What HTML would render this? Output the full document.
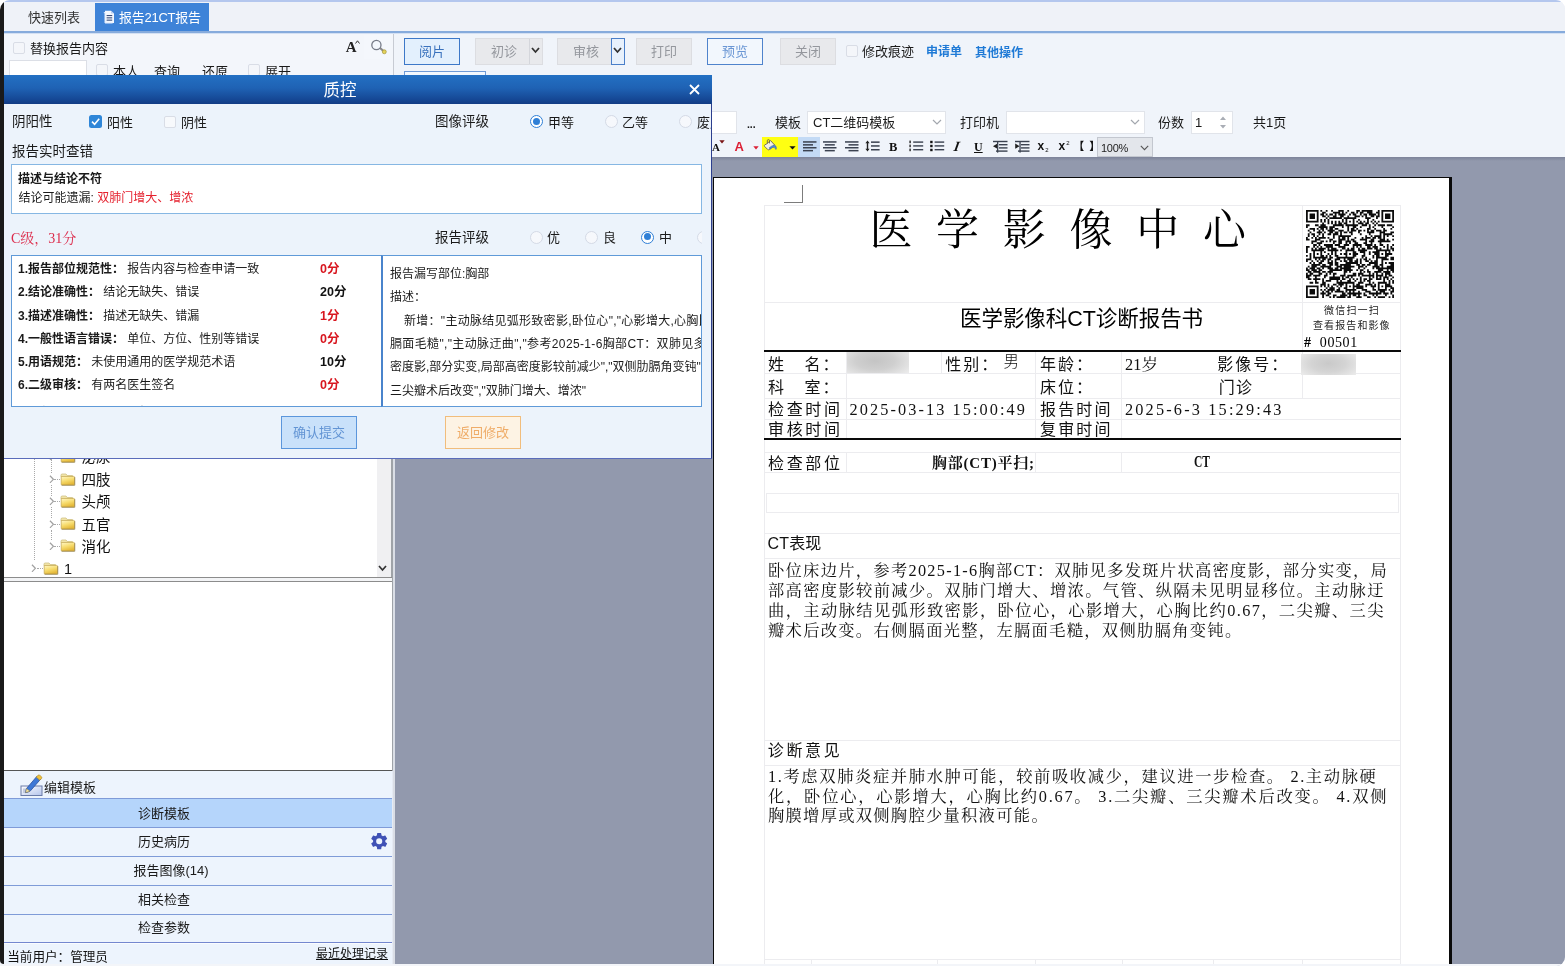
<!DOCTYPE html>
<html lang="zh-CN">
<head>
<meta charset="utf-8">
<title>报告21CT报告</title>
<style>
*{box-sizing:border-box;margin:0;padding:0}
html,body{width:1565px;height:966px;overflow:hidden;background:#fff}
body{font-family:"Liberation Sans","Noto Sans CJK SC",sans-serif;font-size:13px;color:#1a1a1a;position:relative}
#app{position:absolute;left:0;top:0;width:1565px;height:966px;overflow:hidden;background:#f0f4fa;border-radius:10px 9px 9px 0;will-change:transform}
.a{position:absolute;white-space:nowrap}
.t{position:absolute;white-space:nowrap;line-height:16px;height:16px}
.cb{position:absolute;width:12px;height:12px;background:#f4f6fa;border:1px solid #d9dde6;border-radius:2px}
.rd{position:absolute;width:13px;height:13px;background:#f6f8fc;border:1px solid #d4dae6;border-radius:50%}
.rd.on{border:1.5px solid #2f7fd6;background:#fff}
.rd.on:after{content:"";position:absolute;left:1.5px;top:1.5px;width:7px;height:7px;border-radius:50%;background:#2f7fd6}
.btn{position:absolute;height:27px;line-height:25px;text-align:center;font-size:13px;border:1px solid #dcdde1;background:#e8e9ec;color:#94979d}
.btn.bl{border-color:#3d78c8;background:#e3f0fd;color:#3a72bd}
.srf{font-family:"Liberation Serif","Noto Serif CJK SC",serif}
</style>
</head>
<body>
<div id="app">

<!-- ===== top tab bar ===== -->
<div class="a" style="left:0;top:0;width:1565px;height:1.5px;background:#b4c7ee"></div>
<div class="a" style="left:0;top:2px;width:1565px;height:29px;background:#eff2f8"></div>
<div class="t" style="left:28px;top:9.6px;font-size:13px;color:#333">快速列表</div>
<div class="a" style="left:95px;top:3px;width:114px;height:28px;background:#3e83d8"></div>
<svg class="a" style="left:103px;top:9.5px" width="12" height="14" viewBox="0 0 12 14"><path d="M2 .8 H8 L11 3.6 V13 H2 Z" fill="#f4f8ff"/><path d="M.8 2.6 H2 V13 H9.6" fill="none" stroke="#dfe9fb" stroke-width="1"/><rect x="3.6" y="5" width="5.6" height="1.1" fill="#3d4f7a"/><rect x="3.6" y="7.3" width="5.6" height="1.1" fill="#3d4f7a"/><rect x="3.6" y="9.6" width="5.6" height="1.1" fill="#3d4f7a"/><path d="M8 .8 V3.6 H11" fill="#b9cdf0"/></svg>
<div class="t" style="left:119px;top:9.5px;font-size:13px;letter-spacing:-.25px;color:#fff">报告21CT报告</div>
<div class="a" style="left:0;top:31px;width:1565px;height:1.5px;background:#86abdc"></div>
<div class="a" style="left:0;top:32.5px;width:1565px;height:1px;background:#d3e0f3"></div>

<!-- ===== left panel top rows ===== -->
<div class="a" style="left:4px;top:33.5px;width:389px;height:45px;background:#f3f6fb"></div>
<div class="cb" style="left:13px;top:42px"></div>
<div class="t" style="left:30px;top:40.6px">替换报告内容</div>
<div class="a" style="left:345.8px;top:38px;font:bold 15px/18px 'Liberation Serif',serif;color:#222">A</div>
<svg class="a" style="left:355px;top:40px" width="5" height="4" viewBox="0 0 5 4"><path d="M0.5 3.5 L2.5 .8 L4.5 3.5" fill="none" stroke="#333" stroke-width="1"/></svg>
<div class="a" style="left:364px;top:35px;width:26px;height:24px;background:#f4f7fc"></div>
<svg class="a" style="left:369px;top:38px" width="20" height="18" viewBox="0 0 20 18">
 <line x1="10.5" y1="9.5" x2="15" y2="13.5" stroke="#8a8a8a" stroke-width="2.2"/>
 <circle cx="7.4" cy="7" r="4.6" fill="#f3f7fd" stroke="#767b88" stroke-width="1.3"/>
 <circle cx="15.3" cy="13.8" r="2" fill="#e3d25a" stroke="#9a8c2e" stroke-width=".6"/>
</svg>
<div class="a" style="left:9px;top:60px;width:78px;height:22px;background:#fff;border:1px solid #dcdfe6"></div>
<div class="cb" style="left:96px;top:64px"></div>
<div class="t" style="left:113px;top:64px">本人</div>
<div class="t" style="left:154px;top:64px">查询</div>
<div class="t" style="left:202px;top:64px">还原</div>
<div class="cb" style="left:248px;top:64px"></div>
<div class="t" style="left:265px;top:64px">展开</div>
<div class="a" style="left:393px;top:34px;width:1px;height:44px;background:#c7cbd3"></div>

<!-- ===== main toolbar ===== -->
<div class="btn bl" style="left:404px;top:38px;width:56px">阅片</div>
<div class="btn" style="left:475px;top:38px;width:68px;text-align:left;padding-left:15px">初诊</div>
<div class="a" style="left:529px;top:39px;width:1px;height:25px;background:#d4d6db"></div>
<svg class="a" style="left:530px;top:46px" width="11" height="9" viewBox="0 0 11 9"><path d="M2 2 L5.5 6 L9 2" fill="none" stroke="#333" stroke-width="1.8"/></svg>
<div class="btn" style="left:557px;top:38px;width:55px;text-align:left;padding-left:15px;border-right:none">审核</div>
<div class="a" style="left:611px;top:38px;width:14px;height:27px;background:#e8f1fc;border:1px solid #4a7fc9"></div>
<svg class="a" style="left:612px;top:46px" width="11" height="9" viewBox="0 0 11 9"><path d="M2 2 L5.5 6 L9 2" fill="none" stroke="#333" stroke-width="1.8"/></svg>
<div class="btn" style="left:636px;top:38px;width:56px">打印</div>
<div class="btn bl" style="left:707px;top:38px;width:56px;background:#f2f7fd;color:#6b97d4;border-color:#4f83cc">预览</div>
<div class="btn" style="left:780px;top:38px;width:56px">关闭</div>
<div class="cb" style="left:846px;top:45px"></div>
<div class="t" style="left:862px;top:44px">修改痕迹</div>
<div class="t" style="left:926px;top:44px;font-size:12px;font-weight:bold;color:#1f7ad6">申请单</div>
<div class="t" style="left:975px;top:45px;font-size:12px;font-weight:bold;color:#1f7ad6">其他操作</div>
<div class="a" style="left:404px;top:71px;width:82px;height:20px;background:#f3f8fe;border:1px solid #6f9ad6"></div>

<!-- ===== template / printer row ===== -->
<div class="a" style="left:712px;top:111px;width:25px;height:23px;background:#fff;border:1px solid #e1e4ea;border-left:none"></div>
<div class="t" style="left:747px;top:116px;font-size:10.5px;font-weight:bold;letter-spacing:-.1px">...</div>
<div class="t" style="left:775px;top:115px">模板</div>
<div class="a" style="left:807px;top:111px;width:139px;height:23px;background:#fff;border:1px solid #e1e4ea"></div>
<div class="t" style="left:813px;top:115px">CT二维码模板</div>
<svg class="a" style="left:932px;top:119px" width="10" height="7" viewBox="0 0 10 7"><path d="M1 1 L5 5 L9 1" fill="none" stroke="#a3a7ae" stroke-width="1.2"/></svg>
<div class="t" style="left:960px;top:115px">打印机</div>
<div class="a" style="left:1006px;top:111px;width:139px;height:23px;background:#fff;border:1px solid #e1e4ea"></div>
<svg class="a" style="left:1130px;top:119px" width="10" height="7" viewBox="0 0 10 7"><path d="M1 1 L5 5 L9 1" fill="none" stroke="#a3a7ae" stroke-width="1.2"/></svg>
<div class="t" style="left:1158px;top:115px">份数</div>
<div class="a" style="left:1191px;top:111px;width:42px;height:23px;background:#fff;border:1px solid #e1e4ea"></div>
<div class="t" style="left:1195px;top:115px">1</div>
<svg class="a" style="left:1219px;top:115px" width="8" height="15" viewBox="0 0 8 15"><path d="M1 5 L4 1.5 L7 5 Z M1 10 L4 13.5 L7 10 Z" fill="#a9adb5"/></svg>
<div class="t" style="left:1253px;top:115px">共1页</div>
<!-- ===== format toolbar ===== -->
<div class="a" style="left:712px;top:141px;font:bold 11px/12px 'Liberation Serif',serif;color:#111">A</div>
<svg class="a" style="left:719px;top:139.5px" width="6" height="4" viewBox="0 0 6 4"><path d="M.3 .3 H5.7 L3 3.6 Z" fill="#7a1414"/></svg>
<div class="a" style="left:734.5px;top:140px;font:bold 13px/14px 'Liberation Sans',sans-serif;color:#dc2035">A</div>
<svg class="a" style="left:752.5px;top:145.5px" width="6" height="4" viewBox="0 0 6 4"><path d="M.3 .3 H5.7 L3 3.4 Z" fill="#dc2035"/></svg>
<div class="a" style="left:762px;top:137px;width:36px;height:20px;background:#ffff12"></div>
<svg class="a" style="left:763px;top:139px" width="15" height="13" viewBox="0 0 15 13">
 <path d="M3.2 5.2 L7.6 1.6 L11.6 6 L6.4 10.6 Q5.4 11.2 4.6 10.4 L1.6 7.4 Q1 6.4 1.8 5.8 Z" fill="#f4f1e4" stroke="#6b6450" stroke-width=".9"/>
 <path d="M4.3 4.6 V1.8 Q4.3 .6 5.4 .6 Q6.5 .6 6.5 1.8 V4.4" fill="none" stroke="#6b6450" stroke-width=".9"/>
 <path d="M6.2 8.8 Q9 6.2 11.4 6.2 Q13.6 6.6 13.4 9.6 Q13 11.4 12.2 9.6 Q11.6 7.8 9.4 8.6 L7 10.2 Z" fill="#4f86d9" stroke="#3561a8" stroke-width=".5"/>
</svg>
<svg class="a" style="left:788.5px;top:145.5px" width="7" height="4" viewBox="0 0 7 4"><path d="M.4 .3 H6.6 L3.5 3.6 Z" fill="#111"/></svg>
<div class="a" style="left:798px;top:137px;width:22px;height:20px;background:#c3daf5"></div>
<svg class="a" style="left:802.5px;top:140px" width="14" height="12" viewBox="0 0 14 12"><rect x="0.0" y="1.2" width="13.5" height="1.5" fill="#3b4250"/><rect x="0.0" y="4.1" width="10" height="1.5" fill="#3b4250"/><rect x="0.0" y="7.0" width="13.5" height="1.5" fill="#3b4250"/><rect x="0.0" y="9.9" width="10" height="1.5" fill="#3b4250"/></svg>
<svg class="a" style="left:823.2px;top:140px" width="14" height="12" viewBox="0 0 14 12"><rect x="0.0" y="1.2" width="13.5" height="1.5" fill="#3b4250"/><rect x="1.8" y="4.1" width="10" height="1.5" fill="#3b4250"/><rect x="0.0" y="7.0" width="13.5" height="1.5" fill="#3b4250"/><rect x="1.8" y="9.9" width="10" height="1.5" fill="#3b4250"/></svg>
<svg class="a" style="left:844.5px;top:140px" width="14" height="12" viewBox="0 0 14 12"><rect x="0.0" y="1.2" width="13.5" height="1.5" fill="#3b4250"/><rect x="3.5" y="4.1" width="10" height="1.5" fill="#3b4250"/><rect x="0.0" y="7.0" width="13.5" height="1.5" fill="#3b4250"/><rect x="3.5" y="9.9" width="10" height="1.5" fill="#3b4250"/></svg>
<svg class="a" style="left:865px;top:140px" width="15" height="12" viewBox="0 0 15 12">
 <path d="M2.5 .6 L.4 3.2 H1.8 V8.8 H.4 L2.5 11.4 L4.6 8.8 H3.2 V3.2 H4.6 Z" fill="#222"/>
 <rect x="6" y="1.4" width="8.6" height="1.5" fill="#3b4250"/><rect x="6" y="5.2" width="8.6" height="1.5" fill="#3b4250"/><rect x="6" y="9" width="8.6" height="1.5" fill="#3b4250"/>
</svg>
<div class="a" style="left:889px;top:139.5px;font:bold 12.5px/14px 'Liberation Serif',serif;color:#111">B</div>
<svg class="a" style="left:908.5px;top:140px" width="15" height="12" viewBox="0 0 15 12">
 <rect x=".4" y=".6" width="1.4" height="2.6" fill="#222"/><rect x=".4" y="4.6" width="1.4" height="2.6" fill="#222"/><rect x=".4" y="8.6" width="1.4" height="2.6" fill="#222"/>
 <rect x="4.2" y="1.4" width="10" height="1.4" fill="#3b4250"/><rect x="4.2" y="5.2" width="10" height="1.4" fill="#3b4250"/><rect x="4.2" y="9" width="10" height="1.4" fill="#3b4250"/>
</svg>
<svg class="a" style="left:930px;top:140px" width="15" height="12" viewBox="0 0 15 12">
 <rect x=".2" y=".8" width="2.4" height="2.4" fill="#111"/><rect x=".2" y="4.8" width="2.4" height="2.4" fill="#111"/><rect x=".2" y="8.8" width="2.4" height="2.4" fill="#111"/>
 <rect x="4.6" y="1.4" width="9.6" height="1.4" fill="#3b4250"/><rect x="4.6" y="5.2" width="9.6" height="1.4" fill="#3b4250"/><rect x="4.6" y="9" width="9.6" height="1.4" fill="#3b4250"/>
</svg>
<div class="a" style="left:953.5px;top:139px;font:italic bold 14px/15px 'Liberation Serif',serif;color:#111;transform:skewX(-10deg)">I</div>
<div class="a" style="left:974px;top:139.5px;font:bold 12px/14px 'Liberation Serif',serif;color:#111;text-decoration:underline">U</div>
<svg class="a" style="left:993px;top:140px" width="15" height="13" viewBox="0 0 15 13">
 <rect x="0" y=".8" width="14.5" height="1.4" fill="#3b4250"/><rect x="6" y="4" width="8.5" height="1.4" fill="#3b4250"/><rect x="6" y="7.2" width="8.5" height="1.4" fill="#3b4250"/><rect x="3" y="10.4" width="11.5" height="1.4" fill="#3b4250"/>
 <path d="M0 6.2 L4.4 3.6 V8.8 Z" fill="#222"/><rect x="4" y="2" width="1.3" height="10.6" fill="#3b4250"/>
</svg>
<svg class="a" style="left:1015px;top:140px" width="15" height="13" viewBox="0 0 15 13">
 <rect x="0" y=".8" width="14.5" height="1.4" fill="#3b4250"/><rect x="6" y="4" width="8.5" height="1.4" fill="#3b4250"/><rect x="6" y="7.2" width="8.5" height="1.4" fill="#3b4250"/><rect x="3" y="10.4" width="11.5" height="1.4" fill="#3b4250"/>
 <path d="M4.6 6.2 L.2 3.6 V8.8 Z" fill="#222"/><rect x="4.4" y="2" width="1.3" height="10.6" fill="#3b4250"/>
</svg>
<div class="a" style="left:1037.5px;top:139px;font:bold 12px/14px 'Liberation Sans',sans-serif;color:#111">x<span style="font-size:6px;font-weight:normal;position:relative;top:2px;left:1px">2</span></div>
<div class="a" style="left:1058.5px;top:139px;font:bold 12px/14px 'Liberation Sans',sans-serif;color:#111">x<span style="font-size:6px;font-weight:normal;position:relative;top:-5px;left:1px">2</span></div>
<div class="a" style="left:1073.2px;top:138px;font:bold 11px/16px 'Liberation Sans','Noto Sans CJK SC',sans-serif;color:#111;letter-spacing:5px">【】</div>
<div class="a" style="left:1097px;top:137px;width:56px;height:20px;background:#e3e6eb;border:1px solid #c3c7cf"></div>
<div class="t" style="left:1101px;top:139.5px;font-size:11px;letter-spacing:-.3px;color:#222">100%</div>
<svg class="a" style="left:1140px;top:144.5px" width="9" height="6" viewBox="0 0 9 6"><path d="M.8 .8 L4.5 4.6 L8.2 .8" fill="none" stroke="#555" stroke-width="1.1"/></svg>


<!-- ===== gray workspace ===== -->
<div class="a" style="left:395.2px;top:157px;width:1170px;height:809px;background:#9299ad"></div>
<div class="a" style="left:395px;top:157px;width:1170px;height:4px;background:linear-gradient(#7d8399,#9299ad)"></div>
<div class="a" style="left:395px;top:964px;width:1170px;height:2px;background:#e9edf5"></div>

<!-- ===== report page ===== -->
<div class="a" style="left:712.8px;top:177px;height:800px;background:#fff;border-left:1.6px solid #0a0a0a;border-top:1.3px solid #0a0a0a;width:739px"></div>
<div class="a" style="left:1449px;top:177px;width:3px;height:789px;background:#0a0a0a"></div>
<div class="a" style="left:784px;top:184.5px;width:18.5px;height:18.5px;border-right:1px solid #7c7c7c;border-bottom:1px solid #7c7c7c"></div>
<div class="a" style="left:764px;top:205px;width:1px;height:761px;background:#ececef"></div>
<div class="a" style="left:1400px;top:205px;width:1px;height:761px;background:#ececef"></div>
<div class="a" style="left:764px;top:205px;width:637px;height:1px;background:#ececef"></div>
<div class="a" style="left:764px;top:302px;width:637px;height:1px;background:#ececef"></div>
<div class="a" style="left:1302px;top:205px;width:1px;height:146px;background:#ececef"></div>
<div class="a" style="left:764px;top:373px;width:637px;height:1px;background:#ececef"></div>
<div class="a" style="left:764px;top:398px;width:637px;height:1px;background:#ececef"></div>
<div class="a" style="left:764px;top:419px;width:637px;height:1px;background:#ececef"></div>
<div class="a" style="left:764px;top:452px;width:637px;height:1px;background:#ececef"></div>
<div class="a" style="left:764px;top:472px;width:637px;height:1px;background:#ececef"></div>
<div class="a" style="left:846px;top:452px;width:1px;height:20px;background:#ececef"></div>
<div class="a" style="left:1035px;top:452px;width:1px;height:20px;background:#ececef"></div>
<div class="a" style="left:1121px;top:452px;width:1px;height:20px;background:#ececef"></div>
<div class="a" style="left:766px;top:493px;width:633px;height:1px;background:#ececef"></div>
<div class="a" style="left:766px;top:512px;width:633px;height:1px;background:#ececef"></div>
<div class="a" style="left:766px;top:493px;width:1px;height:20px;background:#ececef"></div>
<div class="a" style="left:1398px;top:493px;width:1px;height:20px;background:#ececef"></div>
<div class="a" style="left:764px;top:533px;width:637px;height:1px;background:#ececef"></div>
<div class="a" style="left:764px;top:558px;width:637px;height:1px;background:#ececef"></div>
<div class="a" style="left:764px;top:740px;width:637px;height:1px;background:#ececef"></div>
<div class="a" style="left:764px;top:765px;width:637px;height:1px;background:#ececef"></div>
<div class="a" style="left:764px;top:959px;width:637px;height:1px;background:#ececef"></div>
<div class="a" style="left:811px;top:959px;width:1px;height:7px;background:#ececef"></div>
<div class="a" style="left:937px;top:959px;width:1px;height:7px;background:#ececef"></div>
<div class="a" style="left:1035px;top:959px;width:1px;height:7px;background:#ececef"></div>
<div class="a" style="left:1122px;top:959px;width:1px;height:7px;background:#ececef"></div>
<div class="a" style="left:1213px;top:959px;width:1px;height:7px;background:#ececef"></div>
<div class="a" style="left:1302px;top:959px;width:1px;height:7px;background:#ececef"></div>
<div class="t" style="left:820px;top:964.5px;font-size:16px;letter-spacing:2px;line-height:20px;height:20px;color:#111">报告医师</div>
<div class="t" style="left:1128px;top:964.5px;font-size:16px;letter-spacing:2px;line-height:20px;height:20px;color:#111">审核医师</div>

<div class="a" style="left:846px;top:352px;width:1px;height:46px;background:#ececef"></div>
<div class="a" style="left:1035px;top:352px;width:1px;height:46px;background:#ececef"></div>
<div class="a" style="left:1121px;top:352px;width:1px;height:46px;background:#ececef"></div>
<div class="a" style="left:1302px;top:352px;width:1px;height:46px;background:#ececef"></div>
<div class="a" style="left:941px;top:352px;width:1px;height:21px;background:#ececef"></div>
<div class="a" style="left:846px;top:398px;width:1px;height:40px;background:#ececef"></div>
<div class="a" style="left:1035px;top:398px;width:1px;height:40px;background:#ececef"></div>
<div class="a" style="left:1121px;top:398px;width:1px;height:40px;background:#ececef"></div>
<div class="a" style="left:847px;top:351px;width:62px;height:22px;background:radial-gradient(ellipse 70% 90% at 45% 45%,#c4c4c4 0%,#cfcfcf 45%,#ededed 100%)"></div>
<div class="a" style="left:1301px;top:354px;width:55px;height:21px;background:radial-gradient(ellipse 70% 90% at 50% 45%,#c9c9c9 0%,#d4d4d4 45%,#efefef 100%)"></div>
<div class="t srf" id="ptitle" style="left:869.4px;top:206px;font-size:43px;line-height:50px;height:50px;letter-spacing:23.7px;color:#000">医学影像中心</div>
<svg class="a" style="left:1306.4px;top:209.6px" width="88" height="88" viewBox="0 0 49 49"><path fill="#0c0c0c" d="M0 0h7v1h-7zM8 0h1v1h-1zM11 0h1v1h-1zM14 0h1v1h-1zM18 0h3v1h-3zM23 0h1v1h-1zM28 0h2v1h-2zM31 0h6v1h-6zM40 0h1v1h-1zM42 0h7v1h-7zM0 1h1v1h-1zM6 1h1v1h-1zM9 1h2v1h-2zM15 1h4v1h-4zM20 1h1v1h-1zM22 1h1v1h-1zM25 1h2v1h-2zM28 1h1v1h-1zM30 1h2v1h-2zM34 1h3v1h-3zM39 1h2v1h-2zM42 1h1v1h-1zM48 1h1v1h-1zM0 2h1v1h-1zM2 2h3v1h-3zM6 2h1v1h-1zM8 2h2v1h-2zM11 2h1v1h-1zM13 2h2v1h-2zM16 2h1v1h-1zM18 2h4v1h-4zM24 2h1v1h-1zM26 2h2v1h-2zM30 2h1v1h-1zM32 2h2v1h-2zM35 2h4v1h-4zM40 2h1v1h-1zM42 2h1v1h-1zM44 2h3v1h-3zM48 2h1v1h-1zM0 3h1v1h-1zM2 3h3v1h-3zM6 3h1v1h-1zM9 3h2v1h-2zM12 3h1v1h-1zM15 3h2v1h-2zM19 3h2v1h-2zM23 3h1v1h-1zM27 3h3v1h-3zM31 3h1v1h-1zM33 3h1v1h-1zM36 3h2v1h-2zM39 3h2v1h-2zM42 3h1v1h-1zM44 3h3v1h-3zM48 3h1v1h-1zM0 4h1v1h-1zM2 4h3v1h-3zM6 4h1v1h-1zM11 4h1v1h-1zM13 4h7v1h-7zM21 4h7v1h-7zM33 4h3v1h-3zM39 4h1v1h-1zM42 4h1v1h-1zM44 4h3v1h-3zM48 4h1v1h-1zM0 5h1v1h-1zM6 5h1v1h-1zM8 5h1v1h-1zM10 5h1v1h-1zM12 5h1v1h-1zM20 5h1v1h-1zM22 5h1v1h-1zM26 5h1v1h-1zM29 5h1v1h-1zM34 5h1v1h-1zM37 5h1v1h-1zM42 5h1v1h-1zM48 5h1v1h-1zM0 6h7v1h-7zM8 6h1v1h-1zM10 6h1v1h-1zM12 6h1v1h-1zM14 6h1v1h-1zM16 6h1v1h-1zM18 6h1v1h-1zM20 6h1v1h-1zM22 6h1v1h-1zM24 6h1v1h-1zM26 6h1v1h-1zM28 6h1v1h-1zM30 6h1v1h-1zM32 6h1v1h-1zM34 6h1v1h-1zM36 6h1v1h-1zM38 6h1v1h-1zM40 6h1v1h-1zM42 6h7v1h-7zM9 7h1v1h-1zM12 7h1v1h-1zM14 7h1v1h-1zM16 7h1v1h-1zM18 7h2v1h-2zM21 7h2v1h-2zM26 7h1v1h-1zM29 7h3v1h-3zM33 7h2v1h-2zM37 7h1v1h-1zM39 7h1v1h-1zM0 8h2v1h-2zM5 8h2v1h-2zM8 8h3v1h-3zM15 8h6v1h-6zM22 8h7v1h-7zM31 8h3v1h-3zM35 8h1v1h-1zM38 8h1v1h-1zM40 8h4v1h-4zM45 8h3v1h-3zM0 9h1v1h-1zM7 9h5v1h-5zM13 9h3v1h-3zM20 9h1v1h-1zM23 9h1v1h-1zM26 9h2v1h-2zM30 9h1v1h-1zM35 9h1v1h-1zM37 9h1v1h-1zM42 9h1v1h-1zM48 9h1v1h-1zM2 10h3v1h-3zM6 10h1v1h-1zM8 10h2v1h-2zM11 10h1v1h-1zM13 10h2v1h-2zM16 10h2v1h-2zM23 10h1v1h-1zM25 10h2v1h-2zM28 10h1v1h-1zM34 10h2v1h-2zM38 10h1v1h-1zM43 10h1v1h-1zM47 10h1v1h-1zM1 11h1v1h-1zM4 11h1v1h-1zM7 11h1v1h-1zM9 11h1v1h-1zM12 11h4v1h-4zM18 11h3v1h-3zM23 11h1v1h-1zM25 11h3v1h-3zM29 11h2v1h-2zM32 11h1v1h-1zM34 11h1v1h-1zM36 11h2v1h-2zM39 11h3v1h-3zM43 11h2v1h-2zM2 12h1v1h-1zM6 12h3v1h-3zM10 12h1v1h-1zM13 12h2v1h-2zM16 12h2v1h-2zM19 12h1v1h-1zM21 12h2v1h-2zM24 12h2v1h-2zM29 12h1v1h-1zM34 12h4v1h-4zM41 12h3v1h-3zM47 12h2v1h-2zM1 13h1v1h-1zM3 13h2v1h-2zM7 13h1v1h-1zM9 13h1v1h-1zM12 13h2v1h-2zM15 13h3v1h-3zM19 13h1v1h-1zM25 13h1v1h-1zM30 13h1v1h-1zM35 13h1v1h-1zM41 13h1v1h-1zM43 13h5v1h-5zM1 14h1v1h-1zM4 14h1v1h-1zM6 14h1v1h-1zM9 14h1v1h-1zM15 14h1v1h-1zM18 14h7v1h-7zM33 14h1v1h-1zM36 14h1v1h-1zM38 14h4v1h-4zM43 14h1v1h-1zM45 14h1v1h-1zM48 14h1v1h-1zM0 15h1v1h-1zM3 15h1v1h-1zM5 15h1v1h-1zM7 15h4v1h-4zM12 15h1v1h-1zM15 15h1v1h-1zM18 15h1v1h-1zM20 15h2v1h-2zM23 15h1v1h-1zM27 15h1v1h-1zM31 15h1v1h-1zM33 15h3v1h-3zM37 15h2v1h-2zM40 15h2v1h-2zM43 15h1v1h-1zM0 16h2v1h-2zM5 16h3v1h-3zM13 16h2v1h-2zM18 16h4v1h-4zM23 16h1v1h-1zM25 16h2v1h-2zM30 16h4v1h-4zM36 16h2v1h-2zM41 16h3v1h-3zM45 16h1v1h-1zM48 16h1v1h-1zM3 17h3v1h-3zM8 17h2v1h-2zM11 17h1v1h-1zM13 17h1v1h-1zM15 17h2v1h-2zM18 17h2v1h-2zM22 17h3v1h-3zM26 17h2v1h-2zM33 17h1v1h-1zM35 17h3v1h-3zM40 17h7v1h-7zM3 18h1v1h-1zM6 18h3v1h-3zM15 18h1v1h-1zM18 18h2v1h-2zM22 18h1v1h-1zM24 18h1v1h-1zM27 18h2v1h-2zM32 18h2v1h-2zM36 18h1v1h-1zM41 18h1v1h-1zM4 19h2v1h-2zM7 19h1v1h-1zM10 19h5v1h-5zM16 19h3v1h-3zM21 19h3v1h-3zM26 19h5v1h-5zM33 19h4v1h-4zM38 19h1v1h-1zM41 19h2v1h-2zM45 19h1v1h-1zM48 19h1v1h-1zM0 20h2v1h-2zM4 20h1v1h-1zM6 20h1v1h-1zM8 20h1v1h-1zM11 20h4v1h-4zM18 20h4v1h-4zM26 20h1v1h-1zM28 20h1v1h-1zM30 20h1v1h-1zM34 20h2v1h-2zM37 20h3v1h-3zM43 20h1v1h-1zM45 20h1v1h-1zM47 20h1v1h-1zM0 21h1v1h-1zM3 21h1v1h-1zM5 21h1v1h-1zM7 21h4v1h-4zM12 21h1v1h-1zM14 21h3v1h-3zM20 21h2v1h-2zM23 21h1v1h-1zM25 21h2v1h-2zM29 21h1v1h-1zM31 21h2v1h-2zM34 21h3v1h-3zM38 21h2v1h-2zM41 21h1v1h-1zM45 21h1v1h-1zM47 21h2v1h-2zM0 22h1v1h-1zM3 22h7v1h-7zM12 22h6v1h-6zM19 22h1v1h-1zM22 22h5v1h-5zM29 22h5v1h-5zM39 22h8v1h-8zM48 22h1v1h-1zM0 23h1v1h-1zM4 23h1v1h-1zM8 23h1v1h-1zM10 23h1v1h-1zM14 23h1v1h-1zM16 23h1v1h-1zM22 23h1v1h-1zM26 23h2v1h-2zM30 23h3v1h-3zM35 23h1v1h-1zM37 23h4v1h-4zM44 23h1v1h-1zM46 23h1v1h-1zM2 24h1v1h-1zM4 24h1v1h-1zM6 24h1v1h-1zM8 24h1v1h-1zM12 24h1v1h-1zM14 24h1v1h-1zM16 24h1v1h-1zM19 24h1v1h-1zM21 24h2v1h-2zM24 24h1v1h-1zM26 24h3v1h-3zM32 24h1v1h-1zM35 24h1v1h-1zM38 24h3v1h-3zM42 24h1v1h-1zM44 24h4v1h-4zM0 25h1v1h-1zM2 25h1v1h-1zM4 25h1v1h-1zM8 25h2v1h-2zM11 25h1v1h-1zM13 25h1v1h-1zM16 25h2v1h-2zM22 25h1v1h-1zM26 25h2v1h-2zM31 25h2v1h-2zM37 25h1v1h-1zM39 25h2v1h-2zM44 25h2v1h-2zM2 26h1v1h-1zM4 26h8v1h-8zM13 26h2v1h-2zM17 26h10v1h-10zM31 26h1v1h-1zM33 26h1v1h-1zM37 26h1v1h-1zM39 26h6v1h-6zM47 26h2v1h-2zM0 27h3v1h-3zM5 27h1v1h-1zM7 27h1v1h-1zM9 27h2v1h-2zM12 27h2v1h-2zM16 27h3v1h-3zM21 27h1v1h-1zM23 27h3v1h-3zM28 27h1v1h-1zM30 27h1v1h-1zM32 27h2v1h-2zM35 27h1v1h-1zM39 27h1v1h-1zM42 27h4v1h-4zM47 27h2v1h-2zM0 28h1v1h-1zM3 28h1v1h-1zM6 28h1v1h-1zM8 28h2v1h-2zM12 28h1v1h-1zM14 28h1v1h-1zM16 28h1v1h-1zM19 28h1v1h-1zM21 28h2v1h-2zM24 28h2v1h-2zM27 28h2v1h-2zM30 28h1v1h-1zM33 28h2v1h-2zM36 28h1v1h-1zM38 28h2v1h-2zM42 28h1v1h-1zM2 29h1v1h-1zM4 29h1v1h-1zM7 29h2v1h-2zM12 29h3v1h-3zM16 29h2v1h-2zM22 29h7v1h-7zM30 29h1v1h-1zM35 29h5v1h-5zM42 29h1v1h-1zM44 29h1v1h-1zM46 29h3v1h-3zM3 30h5v1h-5zM9 30h2v1h-2zM13 30h2v1h-2zM16 30h2v1h-2zM19 30h6v1h-6zM28 30h2v1h-2zM31 30h2v1h-2zM34 30h2v1h-2zM38 30h2v1h-2zM41 30h2v1h-2zM47 30h2v1h-2zM1 31h1v1h-1zM3 31h3v1h-3zM8 31h6v1h-6zM17 31h3v1h-3zM21 31h6v1h-6zM29 31h3v1h-3zM33 31h1v1h-1zM37 31h4v1h-4zM42 31h1v1h-1zM45 31h4v1h-4zM0 32h1v1h-1zM2 32h3v1h-3zM6 32h2v1h-2zM9 32h1v1h-1zM12 32h3v1h-3zM16 32h2v1h-2zM19 32h6v1h-6zM29 32h1v1h-1zM32 32h1v1h-1zM37 32h1v1h-1zM39 32h10v1h-10zM0 33h2v1h-2zM3 33h3v1h-3zM7 33h2v1h-2zM13 33h7v1h-7zM21 33h5v1h-5zM28 33h1v1h-1zM30 33h2v1h-2zM34 33h1v1h-1zM40 33h3v1h-3zM45 33h1v1h-1zM47 33h2v1h-2zM1 34h2v1h-2zM4 34h4v1h-4zM9 34h2v1h-2zM12 34h3v1h-3zM21 34h2v1h-2zM24 34h1v1h-1zM30 34h1v1h-1zM32 34h1v1h-1zM34 34h2v1h-2zM38 34h4v1h-4zM43 34h4v1h-4zM48 34h1v1h-1zM0 35h1v1h-1zM2 35h2v1h-2zM7 35h2v1h-2zM11 35h1v1h-1zM13 35h1v1h-1zM15 35h2v1h-2zM21 35h1v1h-1zM26 35h2v1h-2zM29 35h3v1h-3zM35 35h1v1h-1zM37 35h1v1h-1zM39 35h1v1h-1zM42 35h1v1h-1zM44 35h3v1h-3zM0 36h3v1h-3zM4 36h4v1h-4zM10 36h2v1h-2zM15 36h1v1h-1zM19 36h3v1h-3zM23 36h5v1h-5zM29 36h1v1h-1zM31 36h7v1h-7zM39 36h4v1h-4zM44 36h1v1h-1zM46 36h2v1h-2zM0 37h2v1h-2zM5 37h1v1h-1zM10 37h1v1h-1zM13 37h6v1h-6zM20 37h1v1h-1zM22 37h2v1h-2zM25 37h1v1h-1zM30 37h1v1h-1zM35 37h1v1h-1zM37 37h1v1h-1zM39 37h1v1h-1zM41 37h1v1h-1zM43 37h3v1h-3zM48 37h1v1h-1zM1 38h2v1h-2zM4 38h4v1h-4zM9 38h1v1h-1zM13 38h6v1h-6zM20 38h2v1h-2zM24 38h1v1h-1zM26 38h1v1h-1zM28 38h1v1h-1zM30 38h1v1h-1zM32 38h2v1h-2zM35 38h2v1h-2zM39 38h3v1h-3zM43 38h1v1h-1zM45 38h1v1h-1zM47 38h1v1h-1zM5 39h1v1h-1zM9 39h1v1h-1zM11 39h3v1h-3zM17 39h1v1h-1zM19 39h1v1h-1zM23 39h2v1h-2zM27 39h1v1h-1zM30 39h1v1h-1zM32 39h1v1h-1zM34 39h2v1h-2zM43 39h1v1h-1zM46 39h1v1h-1zM48 39h1v1h-1zM2 40h2v1h-2zM5 40h2v1h-2zM9 40h2v1h-2zM17 40h10v1h-10zM29 40h3v1h-3zM35 40h1v1h-1zM37 40h1v1h-1zM40 40h5v1h-5zM46 40h1v1h-1zM48 40h1v1h-1zM8 41h3v1h-3zM12 41h1v1h-1zM15 41h2v1h-2zM18 41h3v1h-3zM22 41h1v1h-1zM26 41h1v1h-1zM28 41h2v1h-2zM33 41h4v1h-4zM38 41h1v1h-1zM40 41h1v1h-1zM44 41h3v1h-3zM0 42h7v1h-7zM8 42h1v1h-1zM10 42h1v1h-1zM12 42h1v1h-1zM14 42h1v1h-1zM17 42h1v1h-1zM19 42h1v1h-1zM22 42h1v1h-1zM24 42h1v1h-1zM26 42h6v1h-6zM33 42h1v1h-1zM36 42h3v1h-3zM40 42h1v1h-1zM42 42h1v1h-1zM44 42h4v1h-4zM0 43h1v1h-1zM6 43h1v1h-1zM11 43h1v1h-1zM13 43h3v1h-3zM18 43h1v1h-1zM21 43h2v1h-2zM26 43h1v1h-1zM28 43h4v1h-4zM37 43h1v1h-1zM40 43h1v1h-1zM44 43h1v1h-1zM47 43h2v1h-2zM0 44h1v1h-1zM2 44h3v1h-3zM6 44h1v1h-1zM8 44h1v1h-1zM10 44h1v1h-1zM12 44h4v1h-4zM17 44h2v1h-2zM22 44h6v1h-6zM31 44h3v1h-3zM37 44h2v1h-2zM40 44h5v1h-5zM46 44h1v1h-1zM48 44h1v1h-1zM0 45h1v1h-1zM2 45h3v1h-3zM6 45h1v1h-1zM9 45h1v1h-1zM11 45h2v1h-2zM14 45h1v1h-1zM16 45h5v1h-5zM22 45h1v1h-1zM24 45h1v1h-1zM26 45h1v1h-1zM29 45h1v1h-1zM33 45h3v1h-3zM39 45h1v1h-1zM41 45h3v1h-3zM47 45h2v1h-2zM0 46h1v1h-1zM2 46h3v1h-3zM6 46h1v1h-1zM8 46h3v1h-3zM12 46h2v1h-2zM20 46h2v1h-2zM23 46h8v1h-8zM32 46h1v1h-1zM35 46h7v1h-7zM43 46h3v1h-3zM47 46h1v1h-1zM0 47h1v1h-1zM6 47h1v1h-1zM9 47h1v1h-1zM11 47h2v1h-2zM15 47h2v1h-2zM19 47h4v1h-4zM24 47h1v1h-1zM26 47h2v1h-2zM29 47h1v1h-1zM32 47h2v1h-2zM37 47h1v1h-1zM39 47h1v1h-1zM44 47h1v1h-1zM48 47h1v1h-1zM0 48h7v1h-7zM9 48h1v1h-1zM13 48h1v1h-1zM15 48h1v1h-1zM17 48h5v1h-5zM23 48h2v1h-2zM28 48h3v1h-3zM34 48h2v1h-2zM38 48h1v1h-1zM40 48h4v1h-4zM46 48h1v1h-1zM48 48h1v1h-1z"/></svg>
<div class="t" id="psub" style="left:960px;top:304.5px;font-size:21.5px;line-height:28px;height:28px;letter-spacing:-.05px;color:#000">医学影像科CT诊断报告书</div>
<div class="t" id="wx1" style="left:1324px;top:304px;font-size:10px;line-height:14px;height:14px;letter-spacing:1.2px;color:#222">微信扫一扫</div>
<div class="t" id="wx2" style="left:1313px;top:318.5px;font-size:10px;line-height:14px;height:14px;letter-spacing:1.1px;color:#222">查看报告和影像</div>
<div class="t srf" id="pno" style="left:1304px;top:335px;font-size:14px;letter-spacing:.6px;color:#000"><b>#</b>&nbsp; 00501</div>
<div class="a" style="left:764px;top:350px;width:637px;height:2px;background:#0a0a0a"></div>
<div class="a" style="left:764px;top:438px;width:637px;height:2px;background:#0a0a0a"></div>
<!-- PT0 -->
<div class="t" id="r1a" style="left:768.0px;top:354.8px;font-family:'Liberation Sans','Noto Sans CJK SC',sans-serif;font-size:16px;font-weight:400;line-height:20px;height:20px;letter-spacing:0.00px;color:#111">姓</div>
<div class="t" id="r1b" style="left:804.4px;top:354.8px;font-family:'Liberation Sans','Noto Sans CJK SC',sans-serif;font-size:16px;font-weight:400;line-height:20px;height:20px;letter-spacing:2.00px;color:#111">名：</div>
<div class="t" id="r1c" style="left:945.3px;top:354.8px;font-family:'Liberation Sans','Noto Sans CJK SC',sans-serif;font-size:16px;font-weight:400;line-height:20px;height:20px;letter-spacing:2.00px;color:#111">性别：</div>
<div class="t" id="r1d" style="left:1003.5px;top:351.5px;font-family:'Liberation Sans','Noto Sans CJK SC',sans-serif;font-size:15.5px;font-weight:300;line-height:20px;height:20px;letter-spacing:0.00px;color:#111">男</div>
<div class="t" id="r1e" style="left:1040.0px;top:354.8px;font-family:'Liberation Sans','Noto Sans CJK SC',sans-serif;font-size:16px;font-weight:400;line-height:20px;height:20px;letter-spacing:2.00px;color:#111">年龄：</div>
<div class="t" id="r1f" style="left:1125.0px;top:354.8px;font-family:'Liberation Serif','Noto Serif CJK SC',serif;font-size:16.3px;font-weight:400;line-height:20px;height:20px;letter-spacing:0.21px;color:#111">21岁</div>
<div class="t" id="r1g" style="left:1217.2px;top:354.8px;font-family:'Liberation Sans','Noto Sans CJK SC',sans-serif;font-size:16px;font-weight:400;line-height:20px;height:20px;letter-spacing:2.00px;color:#111">影像号：</div>
<div class="t" id="r2a" style="left:768.0px;top:377.5px;font-family:'Liberation Sans','Noto Sans CJK SC',sans-serif;font-size:16px;font-weight:400;line-height:20px;height:20px;letter-spacing:0.00px;color:#111">科</div>
<div class="t" id="r2b" style="left:804.4px;top:377.5px;font-family:'Liberation Sans','Noto Sans CJK SC',sans-serif;font-size:16px;font-weight:400;line-height:20px;height:20px;letter-spacing:2.00px;color:#111">室：</div>
<div class="t" id="r2c" style="left:1040.0px;top:377.5px;font-family:'Liberation Sans','Noto Sans CJK SC',sans-serif;font-size:16px;font-weight:400;line-height:20px;height:20px;letter-spacing:2.00px;color:#111">床位：</div>
<div class="t" id="r2d" style="left:1218.7px;top:377.5px;font-family:'Liberation Sans','Noto Sans CJK SC',sans-serif;font-size:16px;font-weight:400;line-height:20px;height:20px;letter-spacing:1.28px;color:#111">门诊</div>
<div class="t" id="r3a" style="left:768.0px;top:400.3px;font-family:'Liberation Sans','Noto Sans CJK SC',sans-serif;font-size:16px;font-weight:400;line-height:20px;height:20px;letter-spacing:2.66px;color:#111">检查时间</div>
<div class="t" id="r3b" style="left:849.6px;top:400.3px;font-family:'Liberation Serif','Noto Serif CJK SC',serif;font-size:16.3px;font-weight:400;line-height:20px;height:20px;letter-spacing:2.08px;color:#111">2025-03-13 15:00:49</div>
<div class="t" id="r3c" style="left:1040.0px;top:400.3px;font-family:'Liberation Sans','Noto Sans CJK SC',sans-serif;font-size:16px;font-weight:400;line-height:20px;height:20px;letter-spacing:2.13px;color:#111">报告时间</div>
<div class="t" id="r3d" style="left:1125.0px;top:400.3px;font-family:'Liberation Serif','Noto Serif CJK SC',serif;font-size:16.3px;font-weight:400;line-height:20px;height:20px;letter-spacing:2.17px;color:#111">2025-6-3 15:29:43</div>
<div class="t" id="r4a" style="left:768.0px;top:420.1px;font-family:'Liberation Sans','Noto Sans CJK SC',sans-serif;font-size:16px;font-weight:400;line-height:20px;height:20px;letter-spacing:2.66px;color:#111">审核时间</div>
<div class="t" id="r4c" style="left:1040.0px;top:420.1px;font-family:'Liberation Sans','Noto Sans CJK SC',sans-serif;font-size:16px;font-weight:400;line-height:20px;height:20px;letter-spacing:2.13px;color:#111">复审时间</div>
<div class="t" id="r5a" style="left:768.0px;top:454.0px;font-family:'Liberation Sans','Noto Sans CJK SC',sans-serif;font-size:16px;font-weight:400;line-height:20px;height:20px;letter-spacing:2.66px;color:#111">检查部位</div>
<div class="t" id="r5b" style="left:932.0px;top:452.6px;font-family:'Liberation Serif','Noto Serif CJK SC',serif;font-size:15px;font-weight:700;line-height:20px;height:20px;letter-spacing:0.77px;color:#111">胸部(CT)平扫;</div>
<div class="t" id="r5c" style="left:1194.0px;top:452.4px;font-family:'Liberation Serif','Noto Serif CJK SC',serif;font-size:16px;font-weight:700;line-height:20px;height:20px;letter-spacing:0.00px;color:#111;transform:scaleX(.72);transform-origin:0 50%">CT</div>
<div class="t" id="h1" style="left:767.6px;top:534.2px;font-family:'Liberation Sans','Noto Sans CJK SC',sans-serif;font-size:16px;font-weight:400;line-height:20px;height:20px;letter-spacing:0.12px;color:#111">CT表现</div>
<div class="t" id="b1" style="left:768.0px;top:561.1px;font-family:'Liberation Serif','Noto Serif CJK SC',serif;font-size:16.3px;font-weight:400;line-height:20px;height:20px;letter-spacing:1.28px;color:#111">卧位床边片，参考2025-1-6胸部CT：双肺见多发斑片状高密度影，部分实变，局</div>
<div class="t" id="b2" style="left:768.0px;top:581.0px;font-family:'Liberation Serif','Noto Serif CJK SC',serif;font-size:16.3px;font-weight:400;line-height:20px;height:20px;letter-spacing:1.34px;color:#111">部高密度影较前减少。双肺门增大、增浓。气管、纵隔未见明显移位。主动脉迂</div>
<div class="t" id="b3" style="left:768.0px;top:600.9px;font-family:'Liberation Serif','Noto Serif CJK SC',serif;font-size:16.3px;font-weight:400;line-height:20px;height:20px;letter-spacing:1.38px;color:#111">曲，主动脉结见弧形致密影，卧位心，心影增大，心胸比约0.67，二尖瓣、三尖</div>
<div class="t" id="b4" style="left:768.0px;top:620.8px;font-family:'Liberation Serif','Noto Serif CJK SC',serif;font-size:16.3px;font-weight:400;line-height:20px;height:20px;letter-spacing:1.29px;color:#111">瓣术后改变。右侧膈面光整，左膈面毛糙，双侧肋膈角变钝</div>
<div class="t" id="b4e" style="left:1225.0px;top:620.8px;font-family:'Liberation Serif','Noto Serif CJK SC',serif;font-size:16.3px;font-weight:400;line-height:20px;height:20px;letter-spacing:0.00px;color:#111">。</div>
<div class="t" id="h2" style="left:767.8px;top:741.0px;font-family:'Liberation Sans','Noto Sans CJK SC',sans-serif;font-size:16px;font-weight:400;line-height:20px;height:20px;letter-spacing:2.63px;color:#111">诊断意见</div>
<div class="t" id="d1" style="left:768.0px;top:767.4px;font-family:'Liberation Serif','Noto Serif CJK SC',serif;font-size:16.3px;font-weight:400;line-height:20px;height:20px;letter-spacing:1.62px;color:#111">1.考虑双肺炎症并肺水肿可能，较前吸收减少，建议进一步检查。 2.主动脉硬</div>
<div class="t" id="d2" style="left:768.0px;top:786.9px;font-family:'Liberation Serif','Noto Serif CJK SC',serif;font-size:16.3px;font-weight:400;line-height:20px;height:20px;letter-spacing:1.77px;color:#111">化，卧位心，心影增大，心胸比约0.67。 3.二尖瓣、三尖瓣术后改变。 4.双侧</div>
<div class="t" id="d3" style="left:768.0px;top:806.1px;font-family:'Liberation Serif','Noto Serif CJK SC',serif;font-size:16.3px;font-weight:400;line-height:20px;height:20px;letter-spacing:1.27px;color:#111">胸膜增厚或双侧胸腔少量积液可能</div>
<div class="t" id="d3e" style="left:1031.5px;top:806.1px;font-family:'Liberation Serif','Noto Serif CJK SC',serif;font-size:16.3px;font-weight:400;line-height:20px;height:20px;letter-spacing:0.00px;color:#111">。</div>
<!-- PT1 -->

<!-- ===== template tree ===== -->
<div class="a" style="left:4px;top:459px;width:388px;height:118px;background:#fff"></div>
<div class="a" style="left:377px;top:459px;width:15px;height:118px;background:#f0f0f2"></div>
<div class="a" style="left:33.5px;top:459px;width:0;height:101px;border-left:1px dotted #a9a9a9"></div>
<div class="a" style="left:51px;top:459px;width:0;height:14px;border-left:1px dotted #a9a9a9"></div>
<div class="a" style="left:51px;top:485px;width:0;height:11px;border-left:1px dotted #a9a9a9"></div>
<div class="a" style="left:51px;top:507px;width:0;height:11px;border-left:1px dotted #a9a9a9"></div>
<div class="a" style="left:51px;top:530px;width:0;height:10px;border-left:1px dotted #a9a9a9"></div>
<svg class="a" style="left:48.8px;top:452.4px" width="5.5" height="8.6" viewBox="0 0 7 11"><path d="M1.2 1 L5.6 5.5 L1.2 10" fill="none" stroke="#a0a0a0" stroke-width="1.5"/></svg>
<div class="a" style="left:54px;top:456.7px;width:6px;height:0;border-top:1px dotted #a9a9a9"></div>
<svg class="a" style="left:60px;top:450.2px" width="16" height="13" viewBox="0 0 16 13"><defs><linearGradient id="fg1" x1="0" y1="0" x2="0.4" y2="1"><stop offset="0" stop-color="#fff8c9"/><stop offset=".55" stop-color="#f7dc6e"/><stop offset="1" stop-color="#e5b93a"/></linearGradient></defs><path d="M1 2.2 Q1 1 2.2 1 H6 L7.4 2.6 H12.5 V4 H1 Z" fill="#f5e9b0" stroke="#c9b876" stroke-width=".7"/><rect x="1.2" y="3.4" width="13.3" height="8.6" rx=".8" fill="url(#fg1)" stroke="#c2a24a" stroke-width=".7"/><path d="M1.6 12.3 H14.8 V4.2" fill="none" stroke="#8c7a45" stroke-width=".9" opacity=".75"/></svg>
<div class="t" style="left:81.5px;top:446.5px;font-size:14.5px;line-height:20px;height:20px;color:#111">泌尿</div>
<svg class="a" style="left:48.8px;top:474.7px" width="5.5" height="8.6" viewBox="0 0 7 11"><path d="M1.2 1 L5.6 5.5 L1.2 10" fill="none" stroke="#a0a0a0" stroke-width="1.5"/></svg>
<div class="a" style="left:54px;top:479.0px;width:6px;height:0;border-top:1px dotted #a9a9a9"></div>
<svg class="a" style="left:60px;top:472.5px" width="16" height="13" viewBox="0 0 16 13"><defs><linearGradient id="fg2" x1="0" y1="0" x2="0.4" y2="1"><stop offset="0" stop-color="#fff8c9"/><stop offset=".55" stop-color="#f7dc6e"/><stop offset="1" stop-color="#e5b93a"/></linearGradient></defs><path d="M1 2.2 Q1 1 2.2 1 H6 L7.4 2.6 H12.5 V4 H1 Z" fill="#f5e9b0" stroke="#c9b876" stroke-width=".7"/><rect x="1.2" y="3.4" width="13.3" height="8.6" rx=".8" fill="url(#fg2)" stroke="#c2a24a" stroke-width=".7"/><path d="M1.6 12.3 H14.8 V4.2" fill="none" stroke="#8c7a45" stroke-width=".9" opacity=".75"/></svg>
<div class="t" style="left:81.5px;top:469.8px;font-size:14.5px;line-height:20px;height:20px;color:#111">四肢</div>
<svg class="a" style="left:48.8px;top:497.0px" width="5.5" height="8.6" viewBox="0 0 7 11"><path d="M1.2 1 L5.6 5.5 L1.2 10" fill="none" stroke="#a0a0a0" stroke-width="1.5"/></svg>
<div class="a" style="left:54px;top:501.3px;width:6px;height:0;border-top:1px dotted #a9a9a9"></div>
<svg class="a" style="left:60px;top:494.8px" width="16" height="13" viewBox="0 0 16 13"><defs><linearGradient id="fg3" x1="0" y1="0" x2="0.4" y2="1"><stop offset="0" stop-color="#fff8c9"/><stop offset=".55" stop-color="#f7dc6e"/><stop offset="1" stop-color="#e5b93a"/></linearGradient></defs><path d="M1 2.2 Q1 1 2.2 1 H6 L7.4 2.6 H12.5 V4 H1 Z" fill="#f5e9b0" stroke="#c9b876" stroke-width=".7"/><rect x="1.2" y="3.4" width="13.3" height="8.6" rx=".8" fill="url(#fg3)" stroke="#c2a24a" stroke-width=".7"/><path d="M1.6 12.3 H14.8 V4.2" fill="none" stroke="#8c7a45" stroke-width=".9" opacity=".75"/></svg>
<div class="t" style="left:81.5px;top:492.1px;font-size:14.5px;line-height:20px;height:20px;color:#111">头颅</div>
<svg class="a" style="left:48.8px;top:519.5px" width="5.5" height="8.6" viewBox="0 0 7 11"><path d="M1.2 1 L5.6 5.5 L1.2 10" fill="none" stroke="#a0a0a0" stroke-width="1.5"/></svg>
<div class="a" style="left:54px;top:523.8px;width:6px;height:0;border-top:1px dotted #a9a9a9"></div>
<svg class="a" style="left:60px;top:517.3px" width="16" height="13" viewBox="0 0 16 13"><defs><linearGradient id="fg4" x1="0" y1="0" x2="0.4" y2="1"><stop offset="0" stop-color="#fff8c9"/><stop offset=".55" stop-color="#f7dc6e"/><stop offset="1" stop-color="#e5b93a"/></linearGradient></defs><path d="M1 2.2 Q1 1 2.2 1 H6 L7.4 2.6 H12.5 V4 H1 Z" fill="#f5e9b0" stroke="#c9b876" stroke-width=".7"/><rect x="1.2" y="3.4" width="13.3" height="8.6" rx=".8" fill="url(#fg4)" stroke="#c2a24a" stroke-width=".7"/><path d="M1.6 12.3 H14.8 V4.2" fill="none" stroke="#8c7a45" stroke-width=".9" opacity=".75"/></svg>
<div class="t" style="left:81.5px;top:514.6px;font-size:14.5px;line-height:20px;height:20px;color:#111">五官</div>
<svg class="a" style="left:48.8px;top:541.5px" width="5.5" height="8.6" viewBox="0 0 7 11"><path d="M1.2 1 L5.6 5.5 L1.2 10" fill="none" stroke="#a0a0a0" stroke-width="1.5"/></svg>
<div class="a" style="left:54px;top:545.8px;width:6px;height:0;border-top:1px dotted #a9a9a9"></div>
<svg class="a" style="left:60px;top:539.3px" width="16" height="13" viewBox="0 0 16 13"><defs><linearGradient id="fg5" x1="0" y1="0" x2="0.4" y2="1"><stop offset="0" stop-color="#fff8c9"/><stop offset=".55" stop-color="#f7dc6e"/><stop offset="1" stop-color="#e5b93a"/></linearGradient></defs><path d="M1 2.2 Q1 1 2.2 1 H6 L7.4 2.6 H12.5 V4 H1 Z" fill="#f5e9b0" stroke="#c9b876" stroke-width=".7"/><rect x="1.2" y="3.4" width="13.3" height="8.6" rx=".8" fill="url(#fg5)" stroke="#c2a24a" stroke-width=".7"/><path d="M1.6 12.3 H14.8 V4.2" fill="none" stroke="#8c7a45" stroke-width=".9" opacity=".75"/></svg>
<div class="t" style="left:81.5px;top:536.6px;font-size:14.5px;line-height:20px;height:20px;color:#111">消化</div>
<svg class="a" style="left:31.3px;top:563.7px" width="5.5" height="8.6" viewBox="0 0 7 11"><path d="M1.2 1 L5.6 5.5 L1.2 10" fill="none" stroke="#a0a0a0" stroke-width="1.5"/></svg>
<div class="a" style="left:37px;top:568px;width:6px;height:0;border-top:1px dotted #a9a9a9"></div>
<svg class="a" style="left:43px;top:561.5px" width="16" height="13" viewBox="0 0 16 13"><defs><linearGradient id="fg6" x1="0" y1="0" x2="0.4" y2="1"><stop offset="0" stop-color="#fff8c9"/><stop offset=".55" stop-color="#f7dc6e"/><stop offset="1" stop-color="#e5b93a"/></linearGradient></defs><path d="M1 2.2 Q1 1 2.2 1 H6 L7.4 2.6 H12.5 V4 H1 Z" fill="#f5e9b0" stroke="#c9b876" stroke-width=".7"/><rect x="1.2" y="3.4" width="13.3" height="8.6" rx=".8" fill="url(#fg6)" stroke="#c2a24a" stroke-width=".7"/><path d="M1.6 12.3 H14.8 V4.2" fill="none" stroke="#8c7a45" stroke-width=".9" opacity=".75"/></svg>
<div class="t" style="left:64px;top:558.8px;font-size:14.5px;line-height:20px;height:20px;color:#111">1</div>
<svg class="a" style="left:377px;top:564px" width="11" height="9" viewBox="0 0 11 9"><path d="M2 2 L5.5 6 L9 2" fill="none" stroke="#333" stroke-width="1.7"/></svg>
<div class="a" style="left:391.4px;top:459px;width:1.4px;height:312px;background:#9fa3a8"></div>
<div class="a" style="left:392px;top:771px;width:1.5px;height:195px;background:#e6ebf4"></div>
<div class="a" style="left:392.8px;top:459px;width:2.4px;height:507px;background:#dadee6"></div>
<div class="a" style="left:4px;top:577px;width:388px;height:1px;background:#8c8c8c"></div>
<div class="a" style="left:4px;top:578px;width:388px;height:3px;background:#f3f4f6"></div>
<div class="a" style="left:4px;top:581px;width:388px;height:190px;background:#fff;border-top:1px solid #8c8c8c"></div>

<!-- ===== bottom accordion ===== -->
<div class="a" style="left:4px;top:771px;width:388px;height:195px;background:#edf4fd"></div>
<div class="a" style="left:4px;top:770px;width:388px;height:1px;background:#555"></div>
<svg class="a" style="left:20px;top:774px" width="24" height="23" viewBox="0 0 24 23">
 <defs><linearGradient id="ebx" x1="0" y1="0" x2="1" y2="1"><stop offset="0" stop-color="#ffffff"/><stop offset="1" stop-color="#b4c4ec"/></linearGradient></defs><rect x="1" y="12" width="21" height="9.5" fill="url(#ebx)" stroke="#6a7ba8" stroke-width="1"/>
 <rect x="3" y="14.5" width="5" height="4.5" fill="#c3cbe0"/>
 <path d="M6.5 14.5 L17 2.2 L20.6 5.2 L10 17.3 L5.6 18.6 Z" fill="#3e78d6" stroke="#2a4f9c" stroke-width=".8"/>
 <path d="M16.2 3.1 L18 1.2 Q19 .6 20 1.4 L21.5 2.8 Q22.2 3.8 21.5 4.6 L19.8 6.3 Z" fill="#f0c23c" stroke="#a8842a" stroke-width=".6"/>
 <path d="M6.5 14.5 L10 17.3 L5.6 18.6 Z" fill="#f6e3a0" stroke="#8a7a4a" stroke-width=".5"/>
</svg>
<div class="t" style="left:44px;top:779.6px">编辑模板</div>
<div class="a" style="left:4px;top:799px;width:388px;height:29px;background:#b5d5fb"></div>
<div class="a" style="left:4px;top:798px;width:388px;height:1px;background:#7f9bd8"></div>
<div class="a" style="left:4px;top:805.6px;width:320px;text-align:center;line-height:16px;height:16px;font-size:13px;color:#1b1b1b">诊断模板</div>
<div class="a" style="left:4px;top:827px;width:388px;height:1px;background:#7f9bd8"></div>
<div class="a" style="left:4px;top:834.2px;width:320px;text-align:center;line-height:16px;height:16px;font-size:13px;color:#1b1b1b">历史病历</div>
<div class="a" style="left:4px;top:856px;width:388px;height:1px;background:#7f9bd8"></div>
<div class="a" style="left:11px;top:862.8px;width:320px;text-align:center;line-height:16px;height:16px;font-size:13px;color:#1b1b1b">报告图像(14)</div>
<div class="a" style="left:4px;top:885px;width:388px;height:1px;background:#7f9bd8"></div>
<div class="a" style="left:4px;top:891.7px;width:320px;text-align:center;line-height:16px;height:16px;font-size:13px;color:#1b1b1b">相关检查</div>
<div class="a" style="left:4px;top:913.5px;width:388px;height:1px;background:#7f9bd8"></div>
<div class="a" style="left:4px;top:920.4px;width:320px;text-align:center;line-height:16px;height:16px;font-size:13px;color:#1b1b1b">检查参数</div>
<div class="a" style="left:4px;top:942px;width:388px;height:1px;background:#7487cf"></div>
<div class="a" style="left:4px;top:943px;width:388px;height:1px;background:#fafcff"></div>
<svg class="a" style="left:368.7px;top:831.2px" width="20.4" height="20.4" viewBox="0 0 24 24"><path fill="#3f51b5" d="M19.14 12.94c.04-.3.06-.61.06-.94 0-.32-.02-.64-.07-.94l2.03-1.58a.49.49 0 0 0 .12-.61l-1.92-3.32a.49.49 0 0 0-.59-.22l-2.39.96c-.5-.38-1.03-.7-1.62-.94l-.36-2.54a.484.484 0 0 0-.48-.41h-3.84c-.24 0-.43.17-.47.41l-.36 2.54c-.59.24-1.13.57-1.62.94l-2.39-.96a.48.48 0 0 0-.59.22L2.74 8.87c-.12.21-.08.47.12.61l2.03 1.58c-.05.3-.09.63-.09.94s.02.64.07.94l-2.03 1.58a.49.49 0 0 0-.12.61l1.92 3.32c.12.22.37.29.59.22l2.39-.96c.5.38 1.03.7 1.62.94l.36 2.54c.05.24.24.41.48.41h3.84c.24 0 .44-.17.47-.41l.36-2.54c.59-.24 1.13-.56 1.62-.94l2.39.96c.22.08.47 0 .59-.22l1.92-3.32c.12-.22.07-.47-.12-.61l-2.01-1.58zM12 15.6A3.6 3.6 0 1 1 12 8.4a3.6 3.6 0 0 1 0 7.2z"/></svg>
<div class="t" style="left:7.2px;top:948.7px;font-size:12.6px;color:#111">当前用户：管理员</div>
<div class="t" style="left:316px;top:946px;font-size:12px;color:#111;text-decoration:underline">最近处理记录</div>

<!-- ===== QC modal ===== -->
<div class="a" id="modal" style="left:4px;top:75px;width:708px;height:384px;background:#ecf3fb;border:1px solid #5a6cba;border-right:1px solid #2c3f8e;border-left:none;border-top:none;overflow:hidden">
</div>
<div class="a" style="left:4px;top:75px;width:708px;height:29px;background:linear-gradient(#2370c3 0%,#1f62b4 45%,#154794 85%,#123c84 100%)"></div>
<div class="t" style="left:323.5px;top:78.6px;font-size:16.5px;line-height:22px;height:22px;color:#fff">质控</div>
<svg class="a" style="left:689px;top:84px" width="11" height="11" viewBox="0 0 11 11"><path d="M1 1 L10 10 M10 1 L1 10" stroke="#fff" stroke-width="1.8" fill="none"/></svg>
<div class="t" style="left:12px;top:113.8px;font-size:13.5px">阴阳性</div>
<div class="a" style="left:89px;top:115px;width:13px;height:13px;border-radius:2.5px;background:#2f86d8"></div>
<svg class="a" style="left:89px;top:115px" width="13" height="13" viewBox="0 0 13 13"><path d="M3 6.6 L5.6 9.2 L10.2 3.8" fill="none" stroke="#fff" stroke-width="1.6"/></svg>
<div class="t" style="left:107px;top:114.5px">阳性</div>
<div class="cb" style="left:164px;top:115.5px;background:#f7f9fc"></div>
<div class="t" style="left:181px;top:114.5px">阴性</div>
<div class="t" style="left:435px;top:113.8px;font-size:13.5px">图像评级</div>
<div class="rd on" style="left:530px;top:115px"></div>
<div class="t" style="left:548px;top:114.5px">甲等</div>
<div class="rd" style="left:605px;top:115px"></div>
<div class="t" style="left:622px;top:114.5px">乙等</div>
<div class="rd" style="left:679px;top:115px"></div>
<div class="a" style="left:697px;top:114.5px;width:14px;height:16px;overflow:hidden;line-height:16px">废片</div>
<div class="t" style="left:12px;top:143.5px;font-size:13.5px">报告实时查错</div>
<div class="a" style="left:11px;top:164px;width:691px;height:50px;background:#fff;border:1px solid #86b7e3"></div>
<div class="t" style="left:18px;top:170.7px;font-size:12px;font-weight:bold">描述与结论不符</div>
<div class="t" style="left:18.5px;top:190px;font-size:12px">结论可能遗漏: <span style="color:#e5222f">双肺门增大、增浓</span></div>
<div class="t srf" style="left:11px;top:231px;font-size:14px;color:#dc2a4a">C级，31分</div>
<div class="t" style="left:435px;top:229.5px;font-size:13.5px">报告评级</div>
<div class="rd" style="left:530px;top:230.5px"></div>
<div class="t" style="left:547px;top:230px">优</div>
<div class="rd" style="left:585px;top:230.5px"></div>
<div class="t" style="left:603px;top:230px">良</div>
<div class="rd on" style="left:641px;top:230.5px"></div>
<div class="t" style="left:659px;top:230px">中</div>
<div class="a" style="left:697px;top:230.5px;width:5px;height:13px;overflow:hidden"><div class="rd" style="left:0;top:0"></div></div>
<div class="a" style="left:11px;top:255px;width:371px;height:152px;background:#fff;border:1px solid #5f9ad8;overflow:hidden"></div>
<div class="a" style="left:381px;top:255px;width:321px;height:152px;background:#fff;border:1px solid #5f9ad8;border-left:2px solid #4a84cc"></div>
<div class="a" style="left:12px;top:256px;width:369px;height:150px;overflow:hidden">
<div class="a" style="left:-12px;top:-256px">
<div class="t" style="left:18px;top:261.2px;font-size:12px"><b>1.报告部位规范性：</b> 报告内容与检查申请一致</div>
<div class="t" style="left:320px;top:261.2px;font-size:12.5px;font-weight:bold;color:#d8161f">0分</div>
<div class="t" style="left:18px;top:284.4px;font-size:12px"><b>2.结论准确性：</b> 结论无缺失、错误</div>
<div class="t" style="left:320px;top:284.4px;font-size:12.5px;font-weight:bold;color:#111">20分</div>
<div class="t" style="left:18px;top:307.6px;font-size:12px"><b>3.描述准确性：</b> 描述无缺失、错漏</div>
<div class="t" style="left:320px;top:307.6px;font-size:12.5px;font-weight:bold;color:#d8161f">1分</div>
<div class="t" style="left:18px;top:330.8px;font-size:12px"><b>4.一般性语言错误：</b> 单位、方位、性别等错误</div>
<div class="t" style="left:320px;top:330.8px;font-size:12.5px;font-weight:bold;color:#d8161f">0分</div>
<div class="t" style="left:18px;top:354.0px;font-size:12px"><b>5.用语规范：</b> 未使用通用的医学规范术语</div>
<div class="t" style="left:320px;top:354.0px;font-size:12.5px;font-weight:bold;color:#111">10分</div>
<div class="t" style="left:18px;top:377.2px;font-size:12px"><b>6.二级审核：</b> 有两名医生签名</div>
<div class="t" style="left:320px;top:377.2px;font-size:12.5px;font-weight:bold;color:#d8161f">0分</div>
<div class="t" style="left:18px;top:404.6px;font-size:12px"><b>7.危急值：</b> 危急值已上报</div>
</div></div>
<div class="a" style="left:383px;top:256px;width:318px;height:150px;overflow:hidden">
<div class="a" style="left:-383px;top:-256px">
<div class="t" style="left:390px;top:266.1px;font-size:12px">报告漏写部位:胸部</div>
<div class="t" style="left:390px;top:289.4px;font-size:12px">描述：</div>
<div class="t" style="left:404px;top:312.7px;font-size:12px;letter-spacing:.28px">新增：&quot;主动脉结见弧形致密影,卧位心&quot;,&quot;心影增大,心胸比约0.67&quot;,</div>
<div class="t" style="left:390px;top:336.0px;font-size:12px;letter-spacing:.36px">膈面毛糙&quot;,&quot;主动脉迂曲&quot;,&quot;参考2025-1-6胸部CT：双肺见多发斑片状高</div>
<div class="t" style="left:390px;top:359.3px;font-size:12px">密度影,部分实变,局部高密度影较前减少&quot;,&quot;双侧肋膈角变钝&quot;,&quot;二尖瓣、</div>
<div class="t" style="left:390px;top:382.6px;font-size:12px">三尖瓣术后改变&quot;,&quot;双肺门增大、增浓&quot;</div>
</div></div>
<div class="a" style="left:281px;top:416px;width:76px;height:33px;background:#c9e1fa;border:1px solid #5b96dc;color:#6294d4;text-align:center;line-height:31px;font-size:13px">确认提交</div>
<div class="a" style="left:445px;top:416px;width:76px;height:33px;background:#fdf3e4;border:1px solid #f1bd7c;color:#efac68;text-align:center;line-height:31px;font-size:13px">返回修改</div>


<!-- left black window edge -->
<div class="a" style="left:0;top:964px;width:1565px;height:2px;background:#f3f5f9"></div>
<div class="a" style="left:0;top:0;width:4px;height:964px;background:#1a1a1a;border-radius:0 0 0 4px"></div>
</div>
</body>
</html>
